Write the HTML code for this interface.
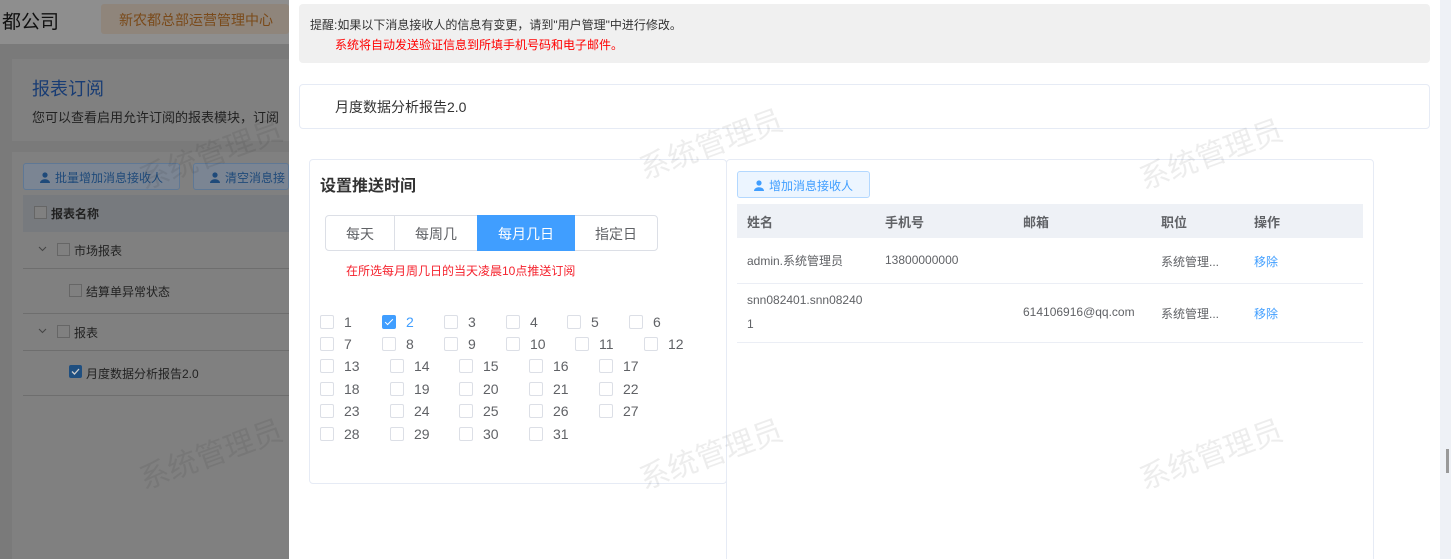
<!DOCTYPE html>
<html><head><meta charset="utf-8"><style>
*{margin:0;padding:0;box-sizing:border-box}
html,body{width:1451px;height:559px;overflow:hidden}
body{position:relative;font-family:"Liberation Sans","Noto Sans CJK SC",sans-serif;background:#7a7a7a}
.a{position:absolute;white-space:nowrap}
.cb{position:absolute;width:14px;height:14px;border:1px solid #dcdfe6;border-radius:2px;background:#fff}
.cb.on{background:#409eff;border-color:#409eff}
.cb.on:after{content:"";position:absolute;left:4px;top:1px;width:3px;height:7px;border:solid #fff;border-width:0 1px 1px 0;transform:rotate(45deg)}
.n{position:absolute;font-size:14px;color:#606266}
.wm{position:absolute;font-size:30px;color:rgba(0,0,0,0.07);transform:rotate(-20deg);white-space:nowrap}
.th{position:absolute;font-size:13px;color:#606266;font-weight:bold}
.td{position:absolute;font-size:12px;color:#606266;white-space:nowrap}
.ic{display:inline-block;vertical-align:-1px;margin-right:5px}
</style></head><body>
<div class="a" style="left:0;top:0;width:289px;height:44px;background:#8e8e8e"></div>
<div class="a" style="left:2px;top:7px;font-size:19px;color:#111">都公司</div>
<div class="a" style="left:101px;top:4px;width:188px;height:30px;background:#8f857b;border-radius:3px"></div>
<div class="a" style="left:119px;top:10px;font-size:14px;color:#7a4a1a">新农都总部运营管理中心</div>
<div class="a" style="left:12px;top:59px;width:277px;height:82px;background:#808080"></div>
<div class="a" style="left:32px;top:75px;font-size:18px;color:#183c74">报表订阅</div>
<div class="a" style="left:32px;top:107px;font-size:13px;color:#222">您可以查看启用允许订阅的报表模块，订阅</div>
<div class="a" style="left:12px;top:152px;width:277px;height:407px;background:#808080"></div>
<div class="a" style="left:23px;top:163px;width:157px;height:27px;border:1px solid #5f7895;border-radius:3px;background:#7b8593"></div>
<div class="a" style="left:40px;top:169px;font-size:12px;color:#1f4a7a"><svg class="ic" width="10" height="11" viewBox="0 0 10 11"><circle cx="5" cy="3" r="2.6" fill="#1f4a7a"/><path d="M0 11 C0 6 10 6 10 11Z" fill="#1f4a7a"/></svg>批量增加消息接收人</div>
<div class="a" style="left:193px;top:163px;width:96px;height:27px;border:1px solid #5f7895;border-radius:3px;background:#7b8593"></div>
<div class="a" style="left:210px;top:169px;font-size:12px;color:#1f4a7a"><svg class="ic" width="10" height="11" viewBox="0 0 10 11"><circle cx="5" cy="3" r="2.6" fill="#1f4a7a"/><path d="M0 11 C0 6 10 6 10 11Z" fill="#1f4a7a"/></svg>清空消息接</div>
<div class="a" style="left:23px;top:195px;width:266px;height:37px;background:#777a7e"></div>
<div class="a" style="left:34px;top:206px;width:13px;height:13px;border:1px solid #666;background:#808080"></div>
<div class="a" style="left:51px;top:205px;font-size:12px;color:#222;font-weight:bold">报表名称</div>
<svg class="a" style="left:38px;top:246px" width="9" height="6"><path d="M1 1L4.5 4.5L8 1" stroke="#444" fill="none"/></svg>
<div class="a" style="left:57px;top:243px;width:13px;height:13px;border:1px solid #666;background:#808080"></div>
<div class="a" style="left:74px;top:242px;font-size:12px;color:#222">市场报表</div>
<div class="a" style="left:23px;top:268px;width:266px;height:1px;background:#6e6e6e"></div>
<div class="a" style="left:69px;top:284px;width:13px;height:13px;border:1px solid #666;background:#808080"></div>
<div class="a" style="left:86px;top:283px;font-size:12px;color:#222">结算单异常状态</div>
<div class="a" style="left:23px;top:313px;width:266px;height:1px;background:#6e6e6e"></div>
<svg class="a" style="left:38px;top:328px" width="9" height="6"><path d="M1 1L4.5 4.5L8 1" stroke="#444" fill="none"/></svg>
<div class="a" style="left:57px;top:325px;width:13px;height:13px;border:1px solid #666;background:#808080"></div>
<div class="a" style="left:74px;top:324px;font-size:12px;color:#222">报表</div>
<div class="a" style="left:23px;top:350px;width:266px;height:1px;background:#6e6e6e"></div>
<div class="a" style="left:69px;top:365px;width:13px;height:13px;background:#1f4f80;border-radius:2px"><svg width="13" height="13" style="position:absolute;left:0;top:0"><path d="M3 6.5L5.5 9L10 4" stroke="#ccc" fill="none" stroke-width="1.3"/></svg></div>
<div class="a" style="left:86px;top:365px;font-size:12px;color:#222">月度数据分析报告2.0</div>
<div class="a" style="left:23px;top:395px;width:266px;height:1px;background:#6e6e6e"></div>

<div class="a" style="left:289px;top:0;width:1151px;height:559px;background:#fff"></div>
<div class="a" style="left:1440px;top:0;width:11px;height:559px;background:#eef1f6"></div>
<div class="a" style="left:1446px;top:449px;width:3px;height:24px;background:#999"></div>

<div class="a" style="left:299px;top:4px;width:1131px;height:59px;background:#f0f0f0;border-radius:4px"></div>
<div class="a" style="left:310px;top:16px;font-size:12px;color:#333">提醒:如果以下消息接收人的信息有变更，请到"用户管理"中进行修改。</div>
<div class="a" style="left:335px;top:36px;font-size:12px;color:#f00">系统将自动发送验证信息到所填手机号码和电子邮件。</div>

<div class="a" style="left:299px;top:84px;width:1131px;height:45px;border:1px solid #e6ebf5;border-radius:4px"></div>
<div class="a" style="left:335px;top:97px;font-size:14px;color:#333">月度数据分析报告2.0</div>

<div class="a" style="left:309px;top:159px;width:418px;height:325px;border:1px solid #e6ebf5;border-radius:4px"></div>
<div class="a" style="left:320px;top:172px;font-size:16px;color:#333;font-weight:bold">设置推送时间</div>
<div class="a" style="left:325px;top:215px;width:333px;height:36px;border:1px solid #dcdfe6;border-radius:4px"></div>
<div class="a" style="left:394px;top:215px;width:1px;height:36px;background:#dcdfe6"></div>
<div class="a" style="left:477px;top:215px;width:98px;height:36px;background:#409eff"></div>
<div class="a" style="left:346px;top:224px;font-size:14px;color:#606266">每天</div>
<div class="a" style="left:415px;top:224px;font-size:14px;color:#606266">每周几</div>
<div class="a" style="left:498px;top:224px;font-size:14px;color:#fff">每月几日</div>
<div class="a" style="left:595px;top:224px;font-size:14px;color:#606266">指定日</div>
<div class="a" style="left:346px;top:262px;font-size:12px;color:#f5222d">在所选每月周几日的当天凌晨10点推送订阅</div>

<div id="grid"></div>

<div class="a" style="left:726px;top:159px;width:648px;height:410px;border:1px solid #e6ebf5;border-radius:4px"></div>
<div class="a" style="left:737px;top:171px;width:133px;height:27px;background:#ecf5ff;border:1px solid #b3d8ff;border-radius:3px"></div>
<div class="a" style="left:754px;top:177px;font-size:12px;color:#409eff"><svg class="ic" width="10" height="11" viewBox="0 0 10 11"><circle cx="5" cy="3" r="2.6" fill="#409eff"/><path d="M0 11 C0 6 10 6 10 11Z" fill="#409eff"/></svg>增加消息接收人</div>
<div class="a" style="left:737px;top:204px;width:626px;height:34px;background:#eef1f6"></div>
<div class="th" style="left:747px;top:212px">姓名</div>
<div class="th" style="left:885px;top:212px">手机号</div>
<div class="th" style="left:1023px;top:212px">邮箱</div>
<div class="th" style="left:1161px;top:212px">职位</div>
<div class="th" style="left:1254px;top:212px">操作</div>
<div class="td" style="left:747px;top:252px">admin.系统管理员</div>
<div class="td" style="left:885px;top:253px">13800000000</div>
<div class="td" style="left:1161px;top:253px">系统管理...</div>
<div class="td" style="left:1254px;top:253px;color:#409eff">移除</div>
<div class="a" style="left:737px;top:283px;width:626px;height:1px;background:#ebeef5"></div>
<div class="td" style="left:747px;top:293px">snn082401.snn08240</div>
<div class="td" style="left:747px;top:317px">1</div>
<div class="td" style="left:1023px;top:305px">614106916@qq.com</div>
<div class="td" style="left:1161px;top:305px">系统管理...</div>
<div class="td" style="left:1254px;top:305px;color:#409eff">移除</div>
<div class="a" style="left:737px;top:342px;width:626px;height:1px;background:#ebeef5"></div>

<div class="wm" style="left:135px;top:130px">系统管理员</div>
<div class="wm" style="left:635px;top:120px">系统管理员</div>
<div class="wm" style="left:1135px;top:130px">系统管理员</div>
<div class="wm" style="left:135px;top:430px">系统管理员</div>
<div class="wm" style="left:635px;top:430px">系统管理员</div>
<div class="wm" style="left:1135px;top:430px">系统管理员</div>

<script>
var rows=[[322,[320,382,444,506,567,629],1],[344,[320,382,444,506,575,644],7],[366,[320,390,459,529,599],13],[389,[320,390,459,529,599],18],[411,[320,390,459,529,599],23],[434,[320,390,459,529],28]];
var h='';
rows.forEach(function(r){r[1].forEach(function(x,i){var n=r[2]+i;var on=n==2;
h+='<div class="cb'+(on?' on':'')+'" style="left:'+x+'px;top:'+(r[0]-7)+'px"></div>';
h+='<div class="n" style="left:'+(x+24)+'px;top:'+(r[0]-8)+'px;'+(on?'color:#409eff':'')+'">'+n+'</div>';});});
document.getElementById('grid').innerHTML=h;
</script>
</body></html>
